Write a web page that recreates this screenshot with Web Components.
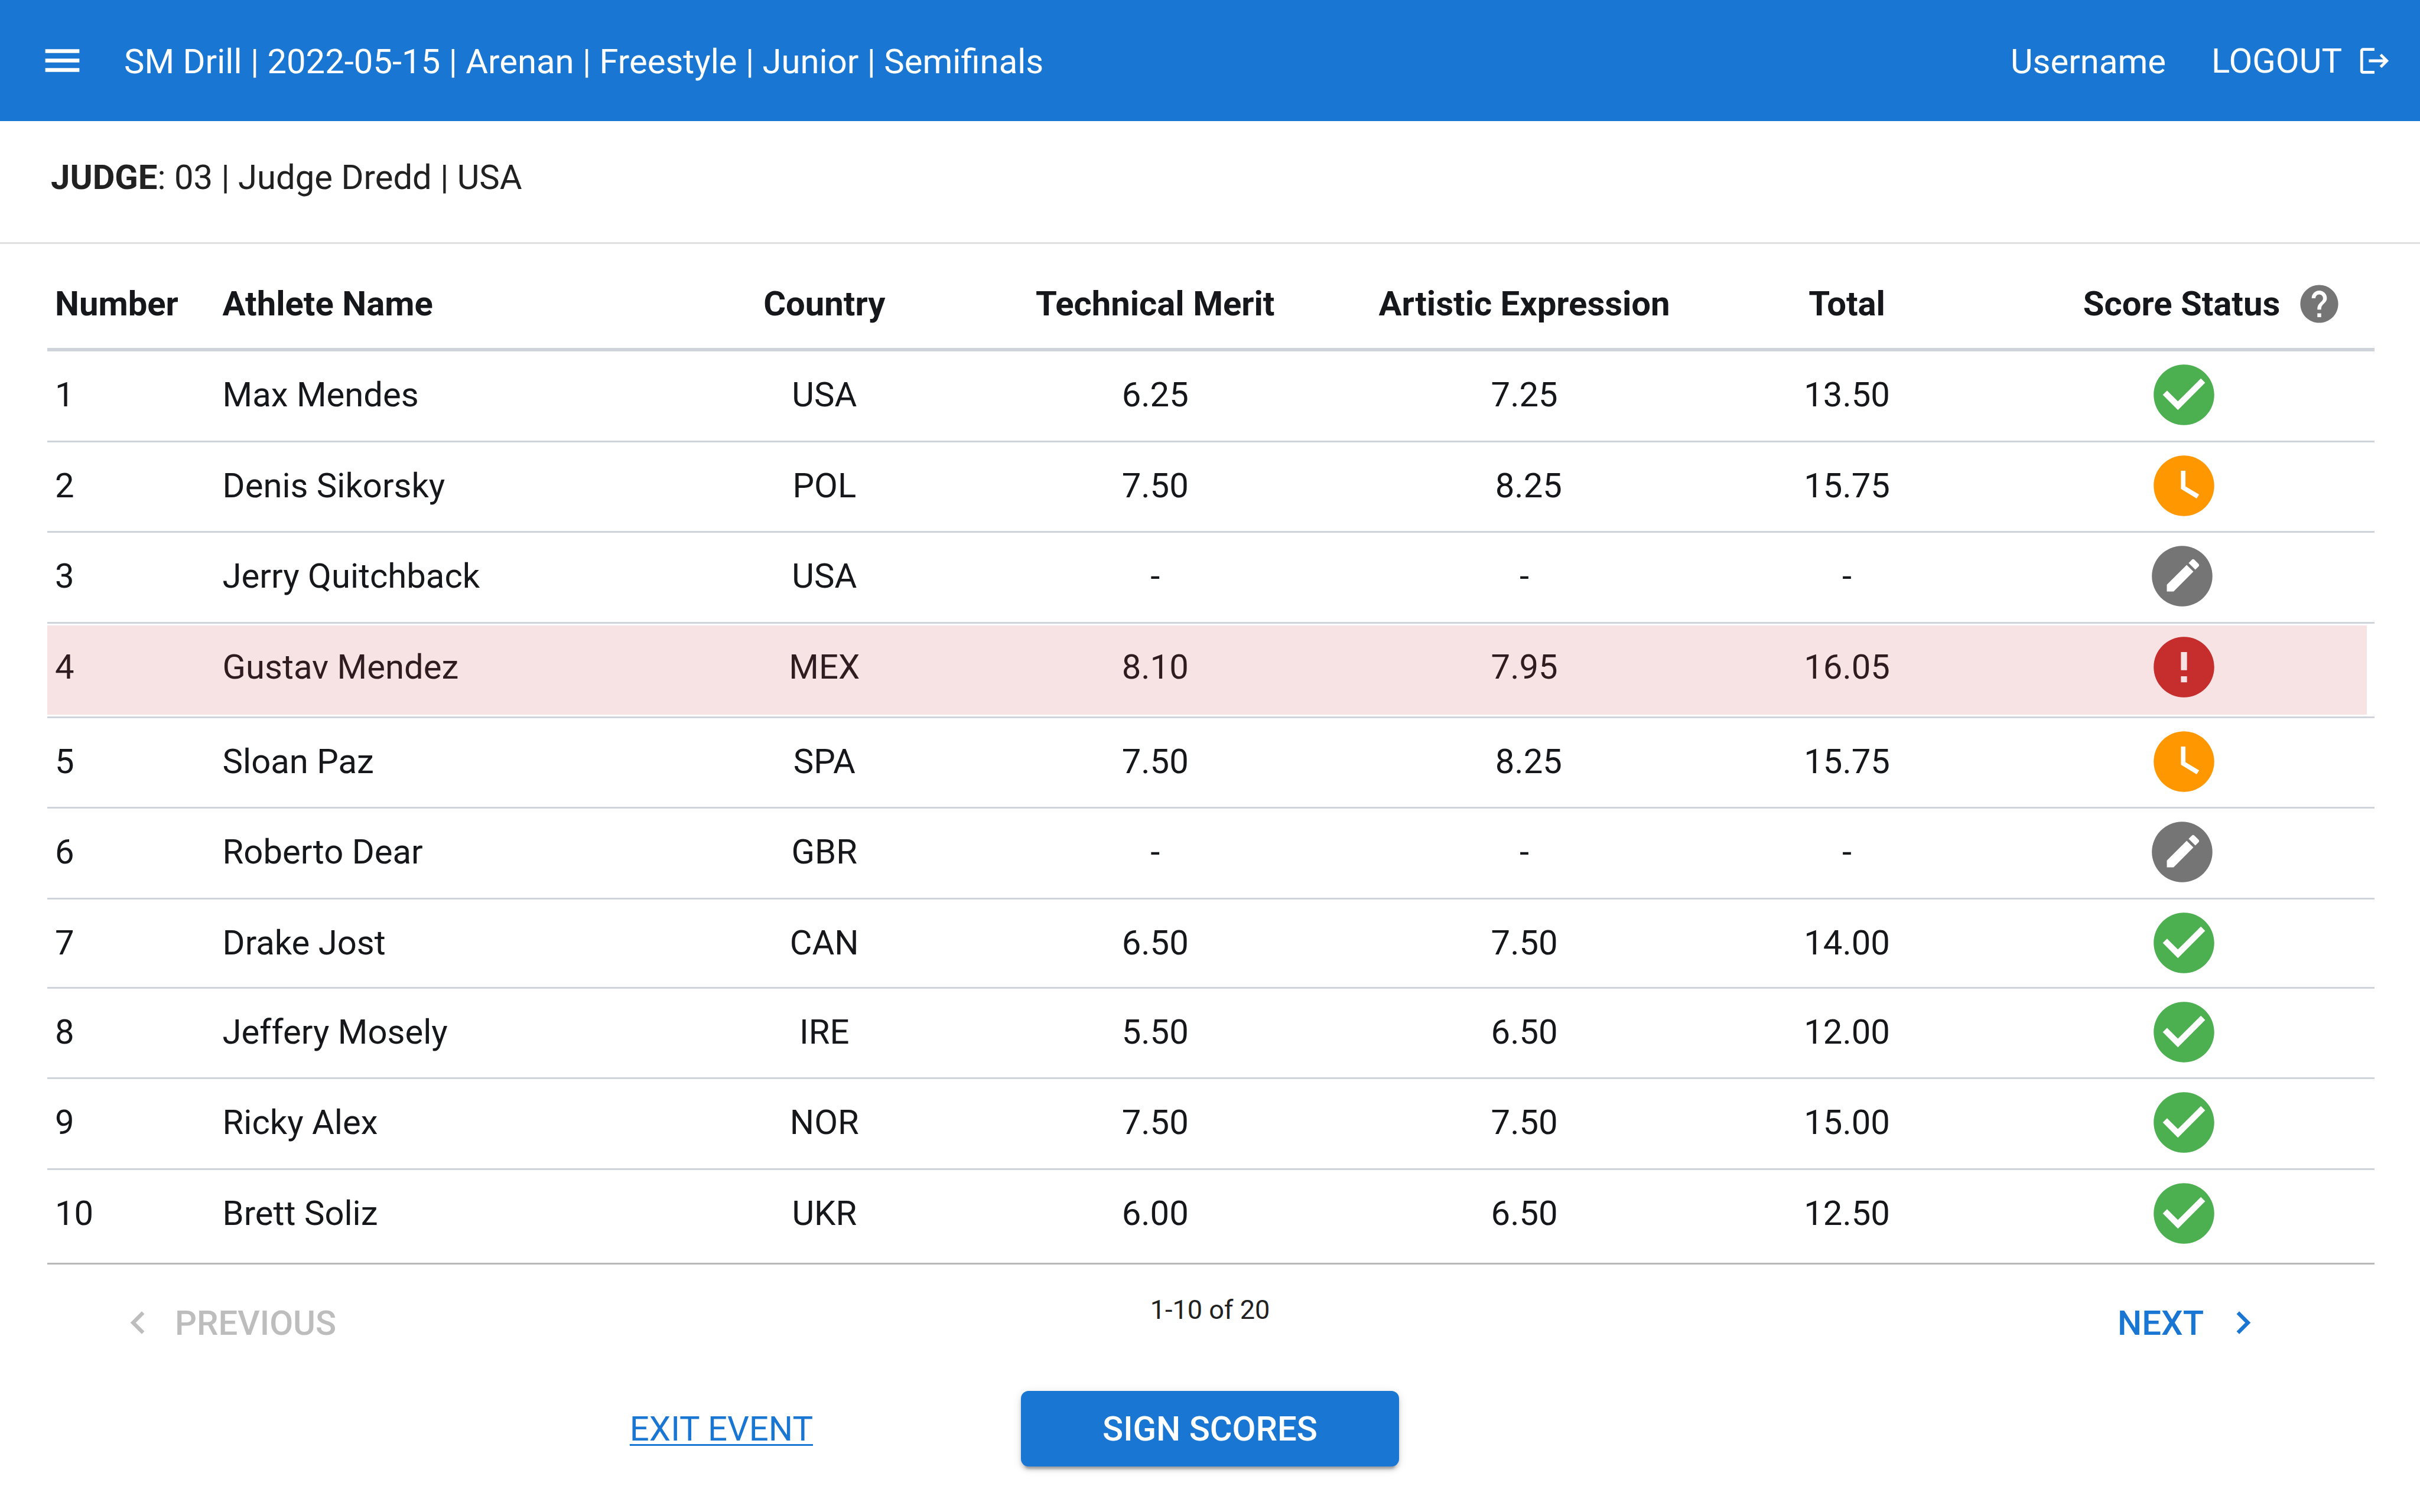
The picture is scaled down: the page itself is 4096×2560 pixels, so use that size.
<!DOCTYPE html>
<html lang="en">
<head>
<meta charset="utf-8">
<title>Judge scores</title>
<style>
  html, body { margin: 0; min-height: 100%; background: #fff; }
  body {
    font-family: Roboto, "Liberation Sans", sans-serif;
    font-size: 58px;
    line-height: 68px;
    color: #212121;
    --primary: #1976d2;
  }
</style>
</head>
<body>
<app-bar>
  <span slot="title">SM Drill | 2022-05-15 | Arenan | Freestyle | Junior | Semifinals</span>
  <span slot="user">Username</span>
</app-bar>
<judge-bar><b>JUDGE</b>: 03 | Judge Dredd | USA</judge-bar>
<score-table></score-table>
<page-nav>1-10 of 20</page-nav>
<event-actions></event-actions>

<script>
const ICONS = {
  menu: '<path d="M3 18h18v-2H3v2zm0-5h18v-2H3v2zm0-7v2h18V6H3z"/>',
  logout: '<path d="M17 7l-1.41 1.41L18.17 11H8v2h10.17l-2.58 2.58L17 17l5-5zM4 5h8V3H4c-1.1 0-2 .9-2 2v14c0 1.1.9 2 2 2h8v-2H4V5z"/>',
  help: '<path d="M12 2C6.48 2 2 6.48 2 12s4.48 10 10 10 10-4.48 10-10S17.52 2 12 2zm1 17h-2v-2h2v2zm2.07-7.75l-.9.92C13.45 12.9 13 13.5 13 15h-2v-.5c0-1.1.45-2.1 1.17-2.83l1.24-1.26c.37-.36.59-.86.59-1.41 0-1.1-.9-2-2-2s-2 .9-2 2H8c0-2.21 1.79-4 4-4s4 1.79 4 4c0 .88-.36 1.68-.93 2.25z"/>',
  done: '<path d="M12 2C6.48 2 2 6.48 2 12s4.48 10 10 10 10-4.48 10-10S17.52 2 12 2zm-2 15l-5-5 1.41-1.41L10 14.17l7.59-7.59L19 8l-9 9z"/>',
  waiting: '<path d="M12 2C6.5 2 2 6.5 2 12s4.5 10 10 10 10-4.5 10-10S17.5 2 12 2zm4.2 14.2L11 13V7h1.5v5.2l4.5 2.7-.8 1.3z"/>',
  error: '<path d="M12 2C6.48 2 2 6.48 2 12s4.48 10 10 10 10-4.48 10-10S17.52 2 12 2zm1 15h-2v-2h2v2zm0-4h-2V7h2v6z"/>',
  edit: '<circle cx="11.4" cy="12" r="10"/><path fill="#fff" transform="translate(4.57 4.62) scale(.592)" d="M3 17.25V21h3.75L17.81 9.94l-3.75-3.75L3 17.25zM20.71 7.04c.39-.39.39-1.02 0-1.41l-2.34-2.34c-.39-.39-1.02-.39-1.41 0l-1.83 1.83 3.75 3.75 1.83-1.83z"/>',
  left: '<path d="M15.41 7.41L14 6l-6 6 6 6 1.41-1.41L10.83 12z"/>',
  right: '<path d="M10 6L8.59 7.41 13.17 12l-4.58 4.59L10 18l6-6z"/>'
};

class Base extends HTMLElement {
  connectedCallback() {
    if (!this.shadowRoot) this.attachShadow({ mode: 'open' }).innerHTML = this.render();
  }
}

/* <ui-icon name size> : a 24-unit glyph in the current colour */
class UiIcon extends Base {
  render() {
    return `<style>
      :host { display: block; flex: none; width: 77px; height: 77px; }
      :host([size="small"]) { width: 58px; height: 58px; }
      :host([size="large"]) { width: 123px; height: 123px; }
      svg { display: block; width: 100%; height: 100%; fill: currentColor; }
    </style><svg viewBox="0 0 24 24" aria-hidden="true">${ICONS[this.getAttribute('name')]}</svg>`;
  }
}

class AppBar extends Base {
  render() {
    return `<style>
      :host { display: block; background: var(--primary); color: #fff; }
      header { display: flex; align-items: center; height: 205px; padding: 0 48px 0 67px; box-sizing: border-box; }
      button { font: inherit; color: inherit; background: none; border: 0; padding: 0; display: flex; align-items: center; }
      .title { flex: 1; margin-left: 66px; padding-top: 3px; }
      .user { padding-top: 3px; margin-right: 77px; }
      .logout { gap: 26px; }
    </style>
    <header>
      <button aria-label="Menu"><ui-icon name="menu"></ui-icon></button>
      <div class="title"><slot name="title"></slot></div>
      <div class="user"><slot name="user"></slot></div>
      <button class="logout">LOGOUT<ui-icon name="logout" size="small"></ui-icon></button>
    </header>`;
  }
}

class JudgeBar extends Base {
  render() {
    return `<style>
      :host { display: block; padding: 61px 86px 76px; border-bottom: 3px solid #e0e0e0; }
    </style><slot></slot>`;
  }
}

const ATHLETES = [
  ['1', 'Max Mendes', 'USA', '6.25', '7.25', '13.50', 'done'],
  ['2', 'Denis Sikorsky', 'POL', '7.50', '\u00a08.25', '15.75', 'waiting'],
  ['3', 'Jerry Quitchback', 'USA', '-', '-', '-', 'edit'],
  ['4', 'Gustav Mendez', 'MEX', '8.10', '7.95', '16.05', 'error'],
  ['5', 'Sloan Paz', 'SPA', '7.50', '\u00a08.25', '15.75', 'waiting'],
  ['6', 'Roberto Dear', 'GBR', '-', '-', '-', 'edit'],
  ['7', 'Drake Jost', 'CAN', '6.50', '7.50', '14.00', 'done'],
  ['8', 'Jeffery Mosely', 'IRE', '5.50', '6.50', '12.00', 'done'],
  ['9', 'Ricky Alex', 'NOR', '7.50', '7.50', '15.00', 'done'],
  ['10', 'Brett Soliz', 'UKR', '6.00', '6.50', '12.50', 'done']
];

class ScoreTable extends Base {
  render() {
    const rows = ATHLETES.map(a => `<tr class="${a[6]}">${a.slice(0, 6).map(v => `<td>${v}</td>`).join('')}<td><ui-icon name="${a[6]}" size="large" role="img" aria-label="${a[6]}"></ui-icon></td></tr>`).join('');
    return `<style>
      :host { display: block; padding: 0 77px 0 80px; color: #15171b; }
      table { width: 100%; table-layout: fixed; border-collapse: separate; border-spacing: 0; }
      col.number { width: 7.2%; } col.country { width: 11.88%; } col.technical { width: 16.55%; }
      col.artistic { width: 15.18%; } col.total { width: 12.54%; } col.status { width: 16.4%; }
      th, td { box-sizing: border-box; padding: 0; text-align: center; vertical-align: top; white-space: nowrap; }
      th { height: 182px; padding-top: 67px; font-weight: 700; border-bottom: 6px solid #cfd3da; }
      td { height: 154px; padding-top: 39px; border-bottom: 3px solid #cfd3da; }
      tr > :first-child { text-align: left; padding-left: 13px; }
      tr > :nth-child(2) { text-align: left; padding-left: 13px; }
      td:last-child { padding-top: 12px; }
      tr:nth-child(3n+2) td { height: 153px; }
      tr:nth-child(7) td { height: 151px; }
      tr.error td { height: 160px; }
      tr:last-child td { height: 160px; border-color: #b8b8b8; }
      .label { display: grid; grid-template-columns: 1fr auto 1fr; align-items: center; column-gap: 28px; height: 68px; padding-right: 7px; }
      .label ui-icon { grid-column: 3; margin: -5px 0; color: #757575; }
      .label span { grid-column: 2; }
      td ui-icon { margin: 0 auto; }
      .done ui-icon { color: #4caf50; }
      .waiting ui-icon { color: #ff9800; }
      .edit ui-icon { color: #757575; }
      tr.error { color: #2f1c20; }
      .error ui-icon { color: #c62d2d; }
      tr.error td { background: linear-gradient(#f7e3e4, #f7e3e4) 0 3px / 100% 151px no-repeat; }
      tr.error td:last-child { background-size: calc(100% - 13px) 151px; }
    </style>
    <table>
      <colgroup><col class="number"><col><col class="country"><col class="technical"><col class="artistic"><col class="total"><col class="status"></colgroup>
      <thead><tr><th>Number</th><th>Athlete Name</th><th>Country</th><th>Technical Merit</th><th>Artistic Expression</th><th>Total</th>
        <th><div class="label"><span>Score Status</span><ui-icon name="help"></ui-icon></div></th></tr></thead>
      <tbody>${rows}</tbody>
    </table>`;
  }
}

class PageNav extends Base {
  render() {
    return `<style>
      :host { display: block; }
      nav { display: grid; grid-template-columns: 1fr auto 1fr; align-items: start; padding: 50px 195px 0; }
      button { font: inherit; font-weight: 500; background: none; border: 0; padding: 10px 0 0; display: flex; align-items: center; gap: 24px; color: var(--primary); }
      button:disabled { color: #bdbdbd; }
      .next { justify-self: end; margin-right: 66px; gap: 28px; }
      .range { font-size: 45px; line-height: 54px; }
    </style>
    <nav>
      <button disabled><ui-icon name="left"></ui-icon>PREVIOUS</button>
      <div class="range"><slot></slot></div>
      <button class="next">NEXT<ui-icon name="right"></ui-icon></button>
    </nav>`;
  }
}

class EventActions extends Base {
  render() {
    return `<style>
      :host { display: block; }
      .bar { display: grid; grid-template-columns: 1fr auto 1fr; align-items: center; column-gap: 352px; padding: 77px 0; }
      a { justify-self: end; color: var(--primary); text-decoration: underline; text-decoration-thickness: 3px; text-underline-offset: 6px; }
      button { font: inherit; font-weight: 500; width: 640px; height: 128px; padding: 0; border: 0; border-radius: 13px; background: var(--primary); color: #fff;
        box-shadow: 0 10px 3px -6px rgba(0,0,0,.2), 0 6px 6px rgba(0,0,0,.14), 0 3px 16px rgba(0,0,0,.12); }
    </style>
    <div class="bar"><a href="#exit">EXIT EVENT</a><button>SIGN SCORES</button></div>`;
  }
}

customElements.define('ui-icon', UiIcon);
customElements.define('app-bar', AppBar);
customElements.define('judge-bar', JudgeBar);
customElements.define('score-table', ScoreTable);
customElements.define('page-nav', PageNav);
customElements.define('event-actions', EventActions);
</script>
</body>
</html>
